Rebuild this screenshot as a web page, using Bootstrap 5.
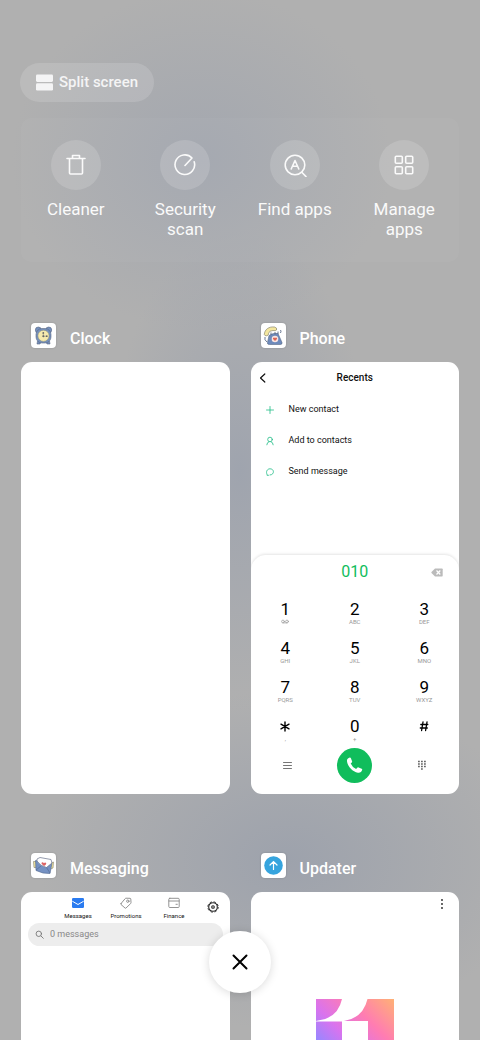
<!DOCTYPE html>
<html lang="en">
<head>
<meta charset="utf-8">
<meta name="viewport" content="width=device-width, initial-scale=1">
<title>Recent apps</title>
<link href="https://cdn.jsdelivr.net/npm/bootstrap@5.3.0/dist/css/bootstrap.min.css" rel="stylesheet">
<style>
  body { font-family: Roboto, "Liberation Sans", sans-serif; background: #b0b0b0; color: #111; }
  .recents {
    height: 100vh; padding: 63px 21px 0;
    background:
      radial-gradient(ellipse 190px 170px at 42% 160px, #a3a7af, #a3a7af00),
      radial-gradient(ellipse 130px 240px at 50% 470px, #9fa4ae, #9fa4ae00),
      radial-gradient(ellipse 250px 170px at 60% 860px, #9da2ac, #9da2ac00),
      #b0b0b0;
  }
  button { font-family: inherit; color: inherit; }
  .plain { border: 0; background: none; padding: 0; }
  .line { fill: none; stroke: currentColor; stroke-linecap: round; stroke-linejoin: round; }
  svg { display: block; flex: none; }
  .split-btn { height: 39px; margin-left: -1px; padding: 0 16px; border-radius: 20px; background: #ffffff24; font-size: 15px; font-weight: 500; color: #f4f4f5; gap: 6px; }
  .tools { margin-top: 16px; padding: 22px 0; border-radius: 10px; background: #ffffff08; min-height: 144px; color: #fafafa; }
  .tool { font-size: 17px; line-height: 20px; }
  .disc { width: 50px; height: 50px; border-radius: 50%; background: #ffffff26; margin-bottom: 9px; }
  .tasks { display: grid; grid-template-columns: 1fr 1fr; column-gap: 21px; row-gap: 59px; margin-top: 61px; }
  .task-head { height: 25px; margin: 0 0 14px 10px; gap: 14px; }
  .app-icon { width: 25px; height: 25px; border-radius: 4px; background: #fff; box-shadow: 0 0 2px #0003; }
  .task-title { font-size: 16px; line-height: 20px; font-weight: 500; color: #fff; margin: 6px 0 0; }
  .window { height: 432px; border-radius: 11px; background: #fff; overflow: hidden; }
  .top-bar { height: 32px; padding: 0 8px; }
  .top-bar h3 { font-size: 10px; font-weight: 500; line-height: 16px; margin: 0; }
  .action { height: 31px; padding-left: 14px; gap: 14px; font-size: 9px; width: 100%; text-align: left; }
  .action svg { color: #20bd87; }
  .dial { border-radius: 15px 15px 0 0; box-shadow: 0 -1px 3px #0000001c; height: 239px; }
  .number { height: 34px; padding: 0 16px; font-size: 16px; color: #10bd5c; }
  .number output, .call { grid-column: 2; justify-self: center; }
  .thirds { display: grid; grid-template-columns: 1fr 1fr 1fr; align-items: center; }
  .key { height: 39px; padding-top: 4px; font-size: 17px; line-height: 19px; color: #000; }
  .key span { display: block; font-size: 6px; line-height: 6px; color: #999; height: 8px; }
  .keys { padding-top: 3px; }
  .call { width: 35px; height: 35px; border-radius: 50%; background: #10bd5c; color: #fff; }
  .dial-foot { padding: 0 16px; color: #666; }
  .tabs { height: 31px; padding: 5px 11px 0 33px; font-size: 6px; line-height: 8px; }
  .tab { width: 48px; }
  .tab svg { margin: 0 auto 3px; color: #888; }
  .gear { margin-top: 4px; }
  .search { height: 23px; margin: 0 7px; padding: 0 7px; border-radius: 12px; background: #ededed; gap: 6px; color: #777; }
  .search input { border: 0; background: none; outline: 0; padding: 0; min-width: 0; font-size: 9px; }
  .search input::placeholder { color: #888; opacity: 1; }
  .menu-row { height: 107px; padding: 6px 12px; }
  .close-all { position: fixed; left: 50%; bottom: 47px; margin-left: -31px; width: 62px; height: 62px; border-radius: 50%; background: #fff; box-shadow: 0 1px 10px #00000026; color: #000; }
</style>
</head>
<body class="overflow-hidden">
<main class="recents overflow-hidden">
  <button class="plain split-btn d-flex align-items-center">
    <svg width="17" height="17" viewBox="0 0 17 17" fill="currentColor"><rect y="0.5" width="17" height="7.4" rx="1.3"/><rect y="9.2" width="17" height="7.4" rx="1.3"/></svg>
    Split screen
  </button>

  <nav class="tools row row-cols-4 g-0 text-center align-items-start" aria-label="Tools">
    <button class="plain tool col"><span class="disc d-flex align-items-center justify-content-center mx-auto">
      <svg class="line" width="24" height="24" viewBox="0 0 24 24" stroke-width="1.6"><path d="M3 5.500h18M5.500 5.500V20q0 1 1 1h11q1 0 1-1V5.500M8.500 5V2.500h7V5"/></svg></span>Cleaner</button>
    <button class="plain tool col"><span class="disc d-flex align-items-center justify-content-center mx-auto">
      <svg class="line" width="24" height="24" viewBox="0 0 24 24" stroke-width="1.6"><path d="M19 5A9.800 9.800 0 1 0 21.200 8.800M12 12.500 19 5"/></svg></span>Security<br>scan</button>
    <button class="plain tool col"><span class="disc d-flex align-items-center justify-content-center mx-auto">
      <svg class="line" width="24" height="24" viewBox="0 0 24 24" stroke-width="1.6"><circle cx="12" cy="12" r="9.800"/><path d="m18.800 19.300 4.200 4.300M8.200 16 12 7.500l3.800 8.500M9.600 13.300h4.800"/></svg></span>Find apps</button>
    <button class="plain tool col"><span class="disc d-flex align-items-center justify-content-center mx-auto">
      <svg class="line" width="24" height="24" viewBox="0 0 24 24" stroke-width="1.600"><rect x="3.300" y="3.300" width="7" height="7" rx="1"/><rect x="13.700" y="3.300" width="7" height="7" rx="1"/><rect x="3.300" y="13.700" width="7" height="7" rx="1"/><rect x="13.700" y="13.700" width="7" height="7" rx="1"/></svg></span>Manage<br>apps</button>
  </nav>

  <div class="tasks">
    <section>
      <header class="task-head d-flex">
        <svg class="app-icon" viewBox="0 0 25 25"><g fill="#7590bc" stroke="#5d6a84" stroke-width=".6"><circle cx="7.300" cy="7" r="3"/><circle cx="17.700" cy="7" r="3"/><path d="m6.500 18-.5 3h3l1-2m8.500-1 .5 3h-3l-1-2"/><rect x="5" y="5.500" width="15" height="14.500" rx="6"/></g><circle cx="12.500" cy="12.800" r="5.600" fill="#f6eaae" stroke="#8b8c76" stroke-width=".5"/><path d="M12.300 10v3.200h3" fill="none" stroke="#86847c" stroke-width=".6"/><g fill="#666"><circle cx="12.300" cy="9.900" r=".9"/><circle cx="12.300" cy="13.200" r="1"/><circle cx="15.800" cy="13.200" r=".9"/></g></svg>
        <h2 class="task-title">Clock</h2>
      </header>
      <div class="window"></div>
    </section>

    <section>
      <header class="task-head d-flex">
        <svg class="app-icon" viewBox="0 0 25 25"><path d="M8 12.500q4.500-3 9-2l4 9q.5 2-2 2H8.500q-2.500 0-2-2z" fill="#6e8abb" stroke="#596987" stroke-width=".6"/><path d="M10 12V9.500m4 2V9m3 2V8.500M19.500 7q1 1 0 3M4 14q-1 3 2 5" fill="none" stroke="#596987" stroke-width=".9"/><path d="M3.300 11.500C3.500 6.500 8 3.300 13.500 4q3 .8 2 3-.8 1.200-3.500.5Q8 7.500 7.500 10.500q.3 2-1.700 2.300-2.100.2-2.500-1.300z" fill="#f4e79f" stroke="#77755f" stroke-width=".6"/><circle cx="14" cy="16" r="3.300" fill="#f9e4df"/><path d="m14 18-2-1.900q-.4-1.700 1-1.700.7 0 1 .6.300-.6 1-.6 1.400 0 1 1.700z" fill="#dc6557"/></svg>
        <h2 class="task-title">Phone</h2>
      </header>
      <div class="window d-flex flex-column">
        <div class="top-bar thirds">
          <button class="plain" aria-label="Back"><svg class="line" width="8" height="10" viewBox="0 0 8 10" stroke-width="1.200"><path d="M5.800 1 1.500 5l4.300 4"/></svg></button>
          <h3 class="text-center">Recents</h3>
        </div>
        <button class="plain action d-flex align-items-center"><svg class="line" width="10" height="10" viewBox="0 0 10 10" stroke-width=".8"><path d="M5 1.500v7M1.500 5h7"/></svg>New contact</button>
        <button class="plain action d-flex align-items-center"><svg class="line" width="10" height="10" viewBox="0 0 10 10" stroke-width=".8"><circle cx="5" cy="3.500" r="2.300"/><path d="M1.800 8.800q.2-2.700 2.200-3.100M8.200 8.800Q8 6.100 6 5.700"/></svg>Add to contacts</button>
        <button class="plain action d-flex align-items-center"><svg class="line" width="10" height="10" viewBox="0 0 10 10" stroke-width=".8"><path d="M3.500 8.300H2V7.200C.8 5 2 1.800 5 1.800c4.600 0 4.600 6.200 0 6.200"/></svg>Send message</button>
        <div class="dial mt-auto">
          <div class="number thirds">
            <output>010</output>
            <button class="plain ms-auto" aria-label="Delete"><svg width="12" height="9" viewBox="0 0 12 9"><path d="M4 .5h7q.7 0 .7.700v6.600q0 .7-.7.700H4L.5 5q-.4-.5 0-1z" fill="#bbb"/><path d="m5.500 2.500 3.800 4m0-4-3.800 4" stroke="#fff" stroke-width="1.200"/></svg></button>
          </div>
          <div class="keys thirds">
            <button class="plain key">1<span><svg class="line mx-auto" width="8" height="5" viewBox="0 0 8 5" stroke-width=".7"><circle cx="2" cy="2.500" r="1.400"/><circle cx="6" cy="2.500" r="1.400"/><path d="M2 3.900h4"/></svg></span></button>
            <button class="plain key">2<span>ABC</span></button>
            <button class="plain key">3<span>DEF</span></button>
            <button class="plain key">4<span>GHI</span></button>
            <button class="plain key">5<span>JKL</span></button>
            <button class="plain key">6<span>MNO</span></button>
            <button class="plain key">7<span>PQRS</span></button>
            <button class="plain key">8<span>TUV</span></button>
            <button class="plain key">9<span>WXYZ</span></button>
            <button class="plain key" aria-label="Star"><svg class="line mx-auto" width="12" height="19" viewBox="0 0 12 19" stroke-width="1.400"><path d="M6 5v9M2 7.200l8 4.600m0-4.600-8 4.600"/></svg><span>,</span></button>
            <button class="plain key">0<span>+</span></button>
            <button class="plain key" aria-label="Hash"><svg class="line mx-auto" width="12" height="19" viewBox="0 0 12 19" stroke-width="1.300"><path d="m5 5-1.400 8.500M9 5l-1.400 8.500M2.800 7.500h7M2.300 11h7"/></svg><span></span></button>
          </div>
          <div class="dial-foot thirds">
            <button class="plain me-auto" aria-label="Menu"><svg class="line ms-3" width="9" height="9" viewBox="0 0 9 9" stroke-width=".9"><path d="M.5 1.500h8M.5 4.500h8M.5 7.500h8"/></svg></button>
            <button class="plain call d-flex align-items-center justify-content-center" aria-label="Call"><svg width="17" height="17" viewBox="0 0 17 17" fill="currentColor"><path d="M2.300 1.200 3.700.6q.8-.2 1.200.6l1.200 3q.2.7-.3 1.200L4.700 6.600q1.500 3.700 5.400 5.400l1.400-1.400q.5-.4 1.100-.2l3 1.300q.8.400.6 1.100c-.5 2.300-2.300 3.300-4.300 2.900C6.500 14.600 1.500 9.400 1 4.300.9 2.800 1.300 1.700 2.300 1.200z"/></svg></button>
            <button class="plain ms-auto" aria-label="Hide keypad"><svg class="me-3" width="10" height="11" viewBox="0 0 10 11"><path d="M1 1.500h8M1 4h8M1 6.500h8M4 9h2" fill="none" stroke="currentColor" stroke-width="1.700" stroke-dasharray="1.800 1.200"/></svg></button>
          </div>
        </div>
      </div>
    </section>

    <section>
      <header class="task-head d-flex">
        <svg class="app-icon" viewBox="0 0 25 25"><path d="M5 8.500H2.500l.5 6h2.500M20 10l2.500-1-.5 6-2.500 1" fill="#f2e59c" stroke="#85816d" stroke-width=".6"/><path d="m4.500 7.500 16.500 2.500-2 10.500q-7 .5-14-3z" fill="#7591c2" stroke="#52688f" stroke-width=".6"/><path d="m6 6 3-1.500 11 2 1 3.500-5.500 4.500Q9 13 6 8z" fill="#fff" stroke="#69718b" stroke-width=".7"/><path d="m13 13-2.500-2.200q0-2 1.700-1.300l.8.700q.7-1 1.800-.5 1.200 1-.3 2.200z" fill="#de6464"/><path d="m5 17 5-4m9 7-3.500-5.500" fill="none" stroke="#52688f" stroke-width=".6"/></svg>
        <h2 class="task-title">Messaging</h2>
      </header>
      <div class="window">
        <div class="tabs d-flex align-items-start">
          <button class="plain tab"><svg width="12" height="12" viewBox="0 0 12 12"><rect x="0" y="1" width="12" height="10" rx="1.200" fill="#2a7bf0"/><path d="M.3 4.200 6 7.500l5.700-3.300" fill="none" stroke="#fff" stroke-width="1"/></svg>Messages</button>
          <button class="plain tab"><svg class="line" width="12" height="12" viewBox="0 0 12 12" stroke-width=".9"><path d="m1 6.600 4.200-5Q5.500 1.200 6 1.200l4 .1q.8 0 .8.800l.2 3.500q0 .6-.4 1L6 11q-.5.500-1 0L1 7.500q-.4-.4 0-.9z"/><circle cx="7.800" cy="4.200" r="1.200"/></svg>Promotions</button>
          <button class="plain tab"><svg class="line" width="12" height="12" viewBox="0 0 12 12" stroke-width=".9"><rect x=".8" y="1.300" width="10.400" height="9.200" rx="1"/><path d="M1 4h10M8 7.300h1.300"/></svg>Finance</button>
          <button class="plain gear ms-auto" aria-label="Settings"><svg width="12" height="12" viewBox="0 0 12 12" fill="none" stroke="#222"><circle cx="6" cy="6" r="4.300" stroke-width="1.100"/><circle cx="6" cy="6" r="5.200" stroke-width=".9" stroke-dasharray="2.300 1.780"/><circle cx="6" cy="6" r="1.300" stroke-width="1.100"/></svg></button>
        </div>
        <label class="search d-flex align-items-center"><svg class="line" width="9" height="9" viewBox="0 0 9 9" stroke-width=".9"><circle cx="3.800" cy="3.800" r="2.700"/><path d="m6 6 2.300 2.300"/></svg><input type="search" placeholder="0 messages" aria-label="Search messages"></label>
      </div>
    </section>

    <section>
      <header class="task-head d-flex">
        <svg class="app-icon" viewBox="0 0 25 25"><circle cx="12.500" cy="12.500" r="9.300" fill="#36a4de"/><path d="M12.500 16.500V9M9 12l3.500-3.500L16 12" fill="none" stroke="#fff" stroke-width="1.200" stroke-linecap="round"/></svg>
        <h2 class="task-title">Updater</h2>
      </header>
      <div class="window">
        <div class="menu-row"><button class="plain d-block ms-auto" aria-label="More options"><svg width="10" height="12" viewBox="0 0 10 12" fill="#222"><circle cx="5" cy="2" r=".9"/><circle cx="5" cy="6" r=".9"/><circle cx="5" cy="10" r=".9"/></svg></button></div>
        <svg class="mx-auto" width="78" height="78" viewBox="0 0 78 78"><defs><linearGradient id="brand" x1="0" y1="1" x2="1" y2="0"><stop offset="0" stop-color="#4b8dff"/><stop offset=".25" stop-color="#9a86ff"/><stop offset=".45" stop-color="#d973ee"/><stop offset=".7" stop-color="#ff7cb2"/><stop offset="1" stop-color="#ffb175"/></linearGradient></defs><path fill="url(#brand)" d="M0 0h26Q22 19 2 21.500L0 22zM0 22.500h26V78H0zM51.500 0H78v78H52V22H28Q47 19 51.500 0z"/></svg>
      </div>
    </section>
  </div>
  <button class="plain close-all d-flex align-items-center justify-content-center" aria-label="Close all"><svg class="line" width="16" height="16" viewBox="0 0 16 16" stroke-width="2"><path d="m1.500 1.500 13 13m0-13-13 13"/></svg></button>
</main>
<script src="https://cdn.jsdelivr.net/npm/bootstrap@5.3.0/dist/js/bootstrap.bundle.min.js"></script>
</body>
</html>
